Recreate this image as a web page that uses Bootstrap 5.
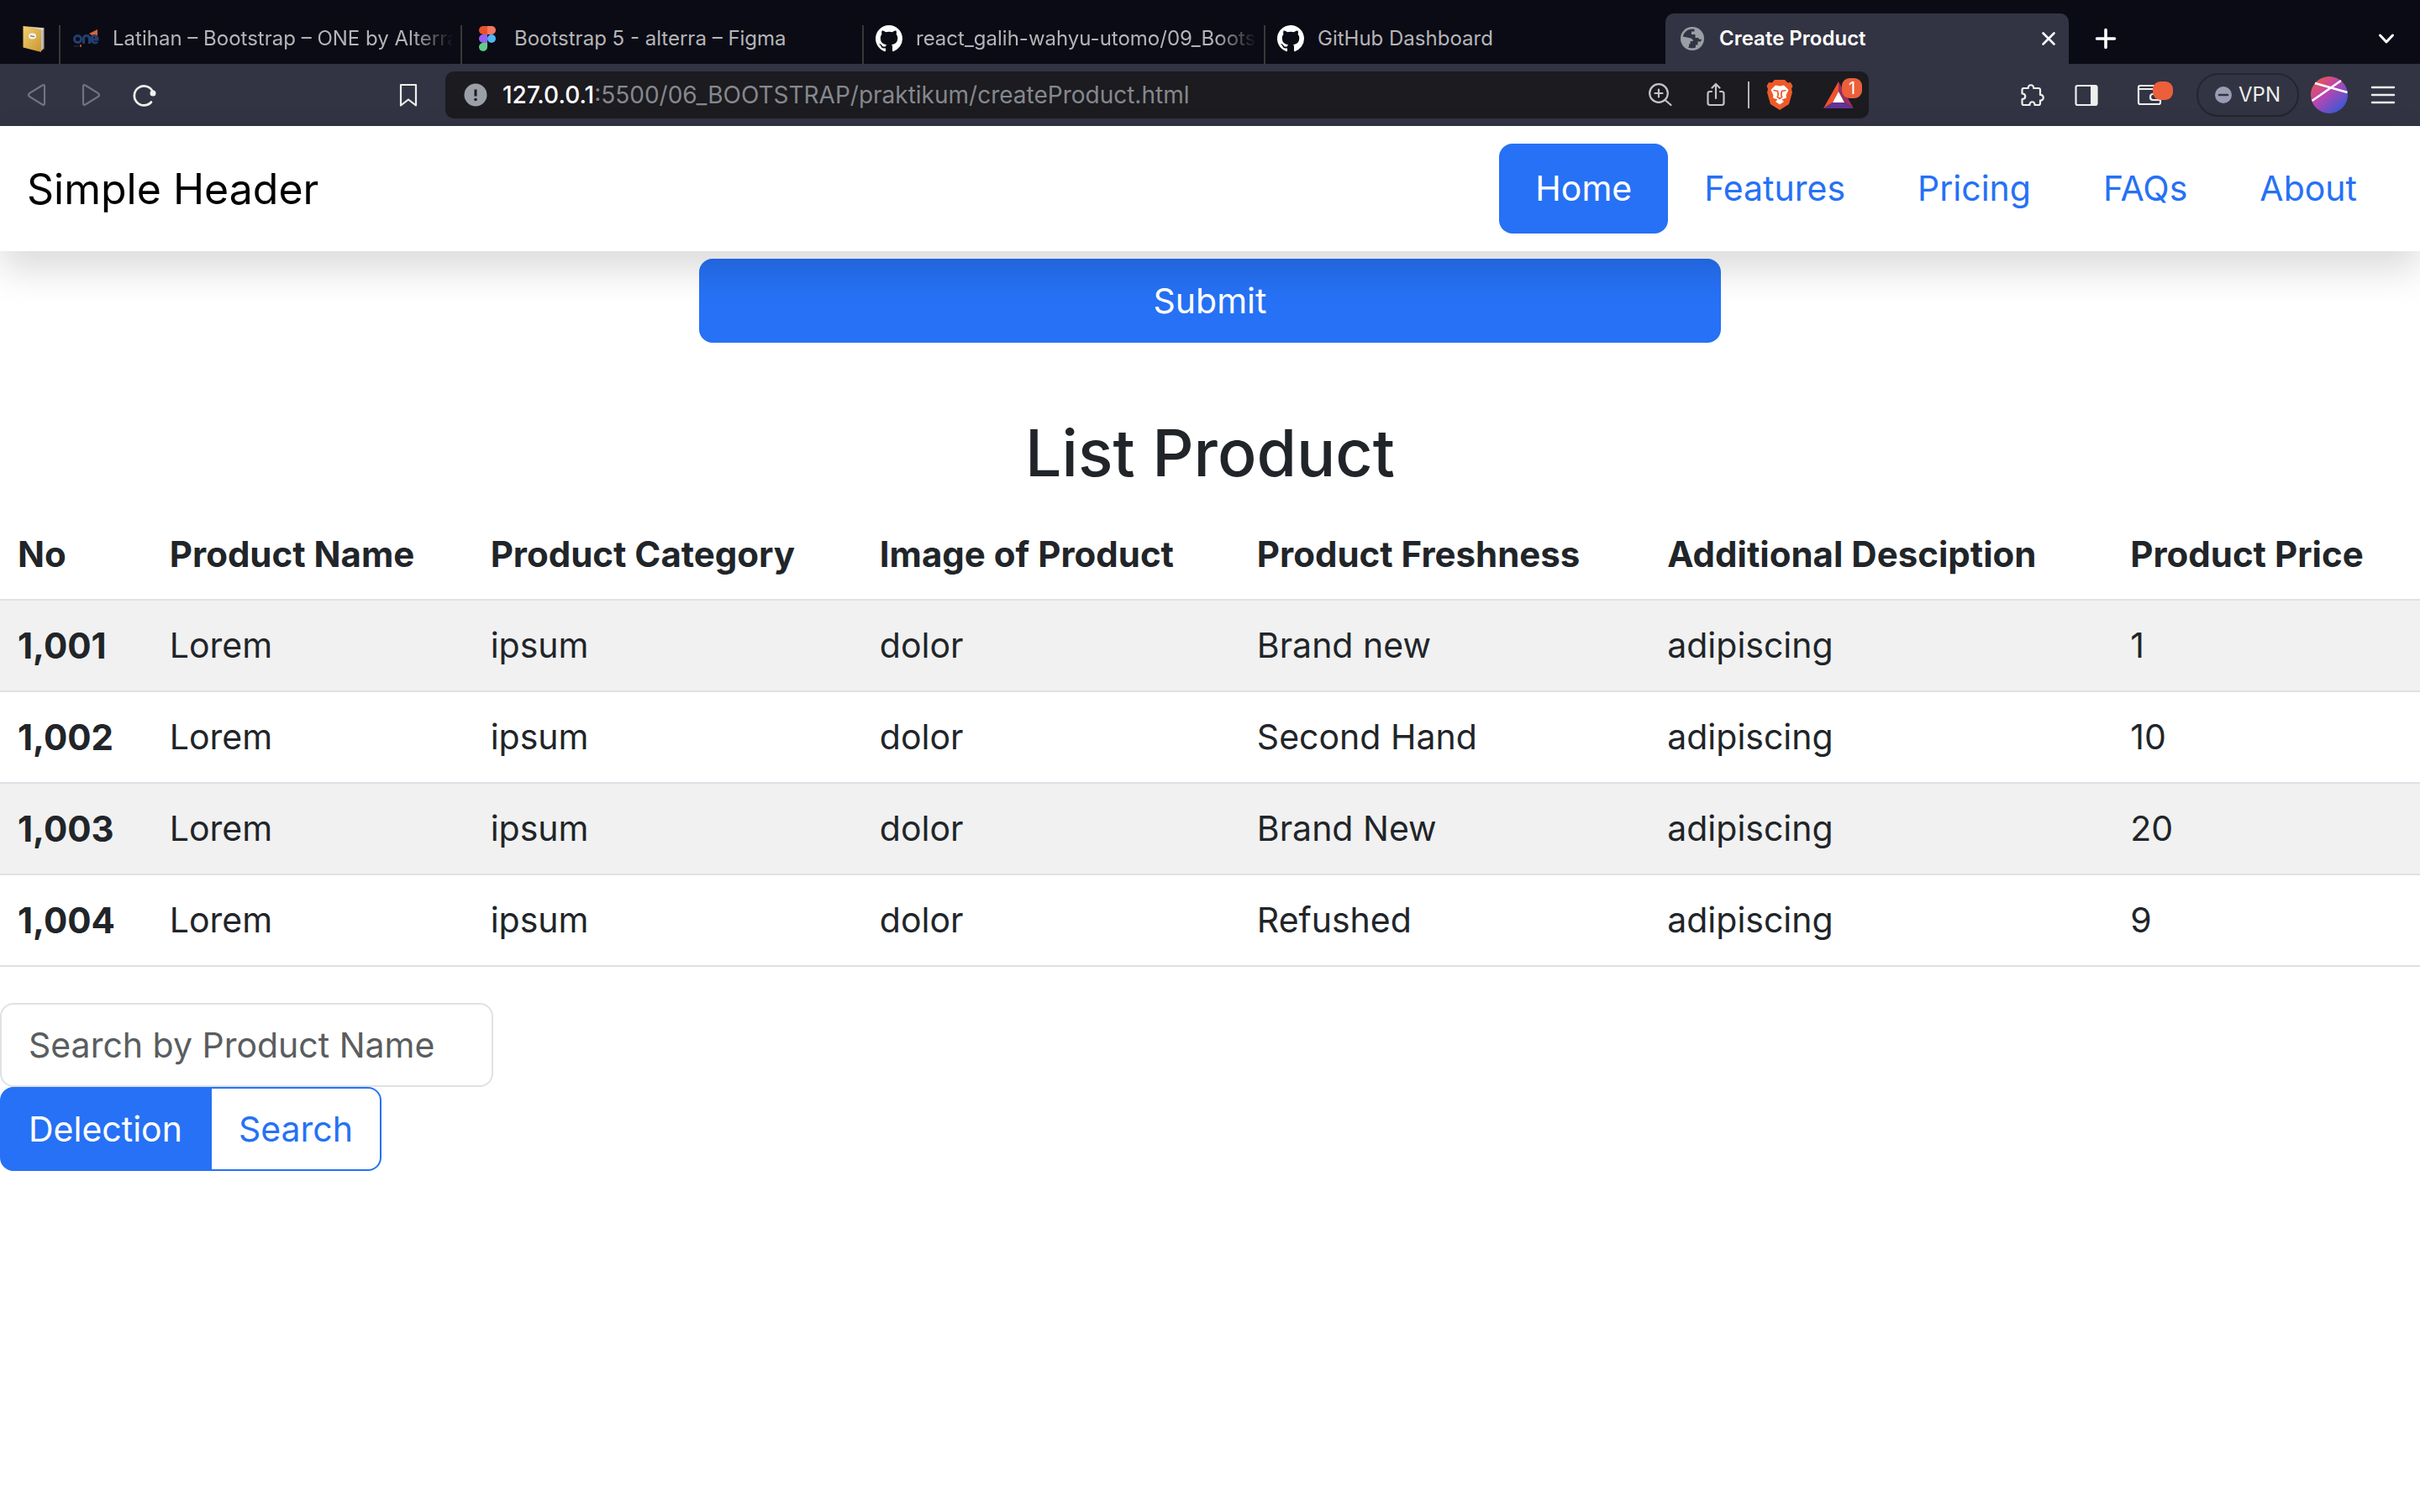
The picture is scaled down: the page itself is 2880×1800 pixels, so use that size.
<!DOCTYPE html>
<html lang="en">
<head>
<meta charset="utf-8">
<meta name="viewport" content="width=device-width, initial-scale=1">
<title>Create Product</title>
<link href="https://cdn.jsdelivr.net/npm/bootstrap@5.3.0/dist/css/bootstrap.min.css" rel="stylesheet">
<style>
:root{--blue:#2671f5;--bar:#323443;--strip:#0b0b15}
body{font-family:Inter,"Liberation Sans",sans-serif;font-size:41px;line-height:64px;color:#212529;background:#fff}
svg{display:block;flex:none}

/* Browser window */
.tab-strip{height:76px;background:var(--strip);font-size:24px;line-height:32px}
.pin-tab{width:72px;height:46px;border-right:2px solid #383838;padding:0 0 0 24px}
.site-tab{flex:0 1 478px;min-width:0;height:46px;gap:16px;padding:0 8px 14px 14px;border-right:2px solid #383838;color:#b5b5b7;text-decoration:none}
.site-tab.before-active{border-color:transparent;flex-basis:476px}
.site-tab.current{flex-basis:480px;height:60px;padding:0 12px 0 16px;border:0;border-radius:10px 10px 0 0;background:var(--bar);color:#fff;font-weight:600}
.tab-title{flex:1 1 0;min-width:0;overflow:hidden;white-space:nowrap}
.tab-title.faded{-webkit-mask-image:linear-gradient(90deg,#000 88%,transparent);mask-image:linear-gradient(90deg,#000 88%,transparent)}
.strip-end{height:60px}
.icon-btn{padding:0;border:0;background:none;line-height:1;color:#eee}
.tool-bar{height:74px;background:var(--bar);line-height:32px}
.bar-left{width:530px;padding:0 28px;gap:32px}
.bar-right{width:656px;padding:0 28px;gap:26px}
.address{height:56px;border-radius:10px;background:#1b1b20;padding:0 18px 0 20px;font-size:28px;line-height:54px;color:#86888c}
.address b{font-weight:500;color:#fff}
.address-tools{gap:20px}
.bar-rule{width:2px;height:32px;background:#b5b5b7}
.count{right:-10px;top:-4px;width:24px;height:24px;border-radius:9px;background:#eb5f3a;color:#fff;font-size:20px;line-height:24px;text-align:center}
.vpn{width:122px;height:52px;border:2px solid #24252d;border-radius:26px;background:none;color:#eee;font-size:24px;gap:8px;padding:0;margin-right:-12px}

/* Page */
.site-head{padding:21px 32px;background:#fff;box-shadow:0 21px 43px rgba(0,0,0,.15);z-index:10}
.site-name{font-size:50px;color:#000;text-decoration:none}
.nav-pills{--bs-nav-link-padding-x:43px;--bs-nav-link-padding-y:21px;--bs-nav-link-color:var(--blue);--bs-nav-pills-border-radius:16px;--bs-nav-pills-link-active-bg:var(--blue)}
.nav-pills .nav-link{line-height:65px;font-size:41px}
.btn-lgx{--bs-btn-padding-x:32px;--bs-btn-padding-y:16px;--bs-btn-font-size:41px;--bs-btn-line-height:64px;--bs-btn-border-width:2px;--bs-btn-border-radius:16px;--bs-btn-bg:var(--blue);--bs-btn-border-color:var(--blue)}
.btn-lgx.btn-outline-primary{--bs-btn-bg:transparent;--bs-btn-color:var(--blue)}
.submit-wrap{max-width:1216px;padding-top:9px}
.list-title{font-size:77px;line-height:96px;margin:83px 0 20px}
.goods{--bs-table-color:#212529;--bs-table-striped-bg:#f1f1f1;border-color:#dee2e6;margin-bottom:43px}
.goods th,.goods td{padding:21px;border-bottom-width:2px;line-height:65px}
.goods th{font-size:42px}
.goods thead th{line-height:64px}
.find-box{width:587px;height:100px;padding:16px 32px;font-size:41px;line-height:64px;border:2px solid #dee2e6;border-radius:16px}
.find-box::placeholder{color:#5a5d60;opacity:1}
</style>
</head>
<body>
<svg width="0" height="0" class="position-absolute" aria-hidden="true"><defs>
<symbol id="octocat" viewBox="0 0 16 16"><path fill="#fff" d="M8 0C3.58 0 0 3.58 0 8c0 3.54 2.29 6.53 5.47 7.59.4.07.55-.17.55-.38 0-.19-.01-.82-.01-1.49-2.01.37-2.53-.49-2.69-.94-.09-.23-.48-.94-.82-1.13-.28-.15-.68-.52-.01-.53.63-.01 1.08.58 1.23.82.72 1.21 1.87.87 2.33.66.07-.52.28-.87.51-1.07-1.78-.2-3.64-.89-3.64-3.95 0-.87.31-1.59.82-2.15-.08-.2-.36-1.02.08-2.12 0 0 .67-.21 2.2.82.64-.18 1.32-.27 2-.27.68 0 1.36.09 2 .27 1.53-1.04 2.2-.82 2.2-.82.44 1.1.16 1.92.08 2.12.51.56.82 1.27.82 2.15 0 3.07-1.87 3.75-3.65 3.95.29.25.54.73.54 1.48 0 1.07-.01 1.93-.01 2.2 0 .21.15.46.55.38A8.01 8.01 0 0 0 16 8c0-4.42-3.58-8-8-8z"/></symbol>
</defs></svg>

<div class="tab-strip d-flex align-items-end">
  <a href="#" class="pin-tab" aria-label="Notes"><svg width="32" height="32" viewBox="0 0 32 32"><defs><linearGradient id="nb" x1="0" y1="0" x2="1" y2="1"><stop offset="0" stop-color="#f3cf74"/><stop offset="1" stop-color="#c9972f"/></linearGradient></defs><path d="M4 1 29 3V28L25 31Z" fill="#6b5a35"/><path d="M7 1.500 28 3.500V27L25 30V6Z" fill="#dcdce4"/><path d="M26 6V28M27.500 5V27" stroke="#8f8f99" stroke-width=".7"/><path d="M3.500 1 25 5V32L3.500 26.500Z" fill="url(#nb)"/><ellipse cx="14.500" cy="13" rx="4.500" ry="3.600" fill="#f5f3ee"/><path d="M12 12.700 17 13.600" stroke="#77746c" stroke-width="1.200"/></svg></a>
  <a href="#" class="site-tab d-flex align-items-center">
    <svg width="32" height="32" viewBox="0 0 32 32" aria-hidden="true"><path d="M30 5V19L27 14 20 10Z" fill="#dc6238"/><g fill="none" stroke="#223e70" stroke-width="3"><circle cx="6.500" cy="16.500" r="4"/><path d="M13.500 22v-6q0-3.500 3.500-3.500t3.500 3.500v6M23 17h7q0-4.500-3.500-4.500T23 16.500t4 4.500q2 0 3-1"/></g><path d="M2 25H8" stroke="#252838" stroke-width="1.500"/><path d="M10 23V26" stroke="#dc6238" stroke-width="1.500"/></svg>
    <span class="tab-title faded">Latihan – Bootstrap – ONE by Alterra</span></a>
  <a href="#" class="site-tab d-flex align-items-center">
    <svg width="32" height="32" viewBox="0 0 32 32"><path d="M16 1H11a5 5 0 0 0 0 10h5Z" fill="#e5532d"/><path d="M16 1h5a5 5 0 0 1 0 10h-5Z" fill="#f37765"/><path d="M16 11h-5a5 5 0 0 0 0 10h5Z" fill="#9760f5"/><circle cx="21" cy="16" r="5" fill="#4fb6f7"/><path d="M16 21h-5a5 5 0 1 0 5 5Z" fill="#5fce85"/></svg>
    <span class="tab-title">Bootstrap 5 - alterra – Figma</span></a>
  <a href="#" class="site-tab d-flex align-items-center">
    <svg width="32" height="32"><use href="#octocat"/></svg>
    <span class="tab-title faded">react_galih-wahyu-utomo/09_Boots</span></a>
  <a href="#" class="site-tab before-active d-flex align-items-center">
    <svg width="32" height="32"><use href="#octocat"/></svg>
    <span class="tab-title">GitHub Dashboard</span></a>
  <div class="site-tab current d-flex align-items-center">
    <svg width="32" height="32" viewBox="0 0 32 32"><circle cx="16" cy="16" r="14" fill="#9a9fa5"/><path d="M16 4.500C10 4.500 6 8.500 4.800 13.500L12 15c3 .5 5 1.500 5 4h-3.500v3.500H11v4c2 1 6 1.200 9 0v-3h2.500v-4h3.500l1.300-3c-1 .8-3.300.5-4.300-1.500h-3.500v-4H15V7.500h3.500V4.800Z" fill="#323443"/><path d="M4.500 16.500H11l3 3-2 2.500v4C8 25.500 4 21 4.500 16.500Z" fill="#9a9fa5"/></svg>
    <span class="tab-title">Create Product</span>
    <button class="icon-btn" aria-label="Close tab"><svg width="24" height="24" viewBox="0 0 24 24"><path d="m5.500 5.500 13 13m0-13-13 13" stroke="#fff" stroke-width="2.600" stroke-linecap="round"/></svg></button>
  </div>
  <div class="strip-end flex-grow-1 d-flex align-items-center justify-content-between">
    <button class="icon-btn ms-4 ps-1" aria-label="New tab"><svg width="32" height="32" viewBox="0 0 32 32"><path d="M16 5.500v21M5.500 16h21" stroke="#fff" stroke-width="3.600" stroke-linecap="round"/></svg></button>
    <button class="icon-btn me-4" aria-label="Search tabs"><svg width="32" height="32" viewBox="0 0 32 32"><path d="m8.500 12 7.500 8 7.500-8" fill="none" stroke="#fff" stroke-width="3" stroke-linecap="round" stroke-linejoin="round"/></svg></button>
  </div>
</div>

<div class="tool-bar d-flex align-items-center">
  <div class="bar-left d-flex align-items-center flex-shrink-0">
    <button class="icon-btn" aria-label="Back"><svg width="32" height="32" viewBox="0 0 32 32"><path d="M25 6v20q0 3-2.500 1.500L7 18q-2-2 0-4L22.500 4.500Q25 3 25 6Z" fill="none" stroke="#717380" stroke-width="2.200"/></svg></button>
    <button class="icon-btn" aria-label="Forward"><svg width="32" height="32" viewBox="0 0 32 32"><path d="M7 6v20q0 3 2.500 1.500L25 18q2-2 0-4L9.500 4.500Q7 3 7 6Z" fill="none" stroke="#717380" stroke-width="2.200"/></svg></button>
    <button class="icon-btn" aria-label="Reload"><svg width="32" height="32" viewBox="0 0 32 32"><path d="M25.500 11.500A11.500 11.500 0 1 0 24 24.500" fill="none" stroke="#f0f0f0" stroke-width="2.700" stroke-linecap="round"/><circle cx="26" cy="14" r="3.500" fill="#f0f0f0"/></svg></button>
    <button class="icon-btn ms-auto" aria-label="Bookmark"><svg width="32" height="32" viewBox="0 0 32 32"><path d="M7 4h18v24.500l-9-7-9 7Z" fill="none" stroke="#eee" stroke-width="2.200" stroke-linejoin="round"/></svg></button>
  </div>
  <div class="address flex-grow-1 d-flex align-items-center">
    <svg width="32" height="32" viewBox="0 0 32 32"><circle cx="16" cy="16" r="13.500" fill="#9aa0a6"/><path d="M16 9.500v8" stroke="#1b1b20" stroke-width="3"/><circle cx="16" cy="21.500" r="1.800" fill="#1b1b20"/></svg>
    <div class="flex-grow-1 ms-3 text-nowrap" role="textbox" tabindex="0" aria-label="Address"><b>127.0.0.1</b>:5500/06_BOOTSTRAP/praktikum/createProduct.html</div>
    <div class="address-tools d-flex align-items-center">
      <button class="icon-btn me-3" aria-label="Zoom"><svg width="32" height="32" viewBox="0 0 32 32"><circle cx="14" cy="14" r="10.800" fill="none" stroke="#c4c4c6" stroke-width="2.200"/><path d="M14 9.500v9M9.500 14h9M21.500 22l7 6" stroke="#c4c4c6" stroke-width="2.200" stroke-linecap="round"/></svg></button>
      <button class="icon-btn" aria-label="Share"><svg width="32" height="32" viewBox="0 0 32 32"><path d="M9 12H7q-2.500 0-2.500 2.500v11Q4.500 28 7 28h14q2.500 0 2.500-2.500v-11Q23.500 12 21 12h-2M14 20V3m-4.500 4.500L14 3l4.500 4.500" fill="none" stroke="#c4c4c6" stroke-width="2.200" stroke-linecap="round"/></svg></button>
      <span class="bar-rule"></span>
      <button class="icon-btn" aria-label="Brave Shields"><svg width="32" height="36" viewBox="0 0 32 36"><path d="M10 0h12l3.500 3.500L29 3l2.500 4.500L30 11l1 4-4 14-11 7-11-7L1 15l1-4L.500 7.500 3 3l3.500.5Z" fill="#ee5a29"/><path d="m11 6.500 5 1 5-1 5.500 5.500-3 6.500.5 3-5.500 2L21 26l-5 3.500L11 26l2.500-2.500-5.500-2 .5-3-3-6.500Z" fill="#fff"/><path d="m8.500 12.500 5 1 .8 4.500-1 2.500 2.700 2 2.700-2-1-2.500.8-4.500 5-1" fill="none" stroke="#ee5a29" stroke-width="1.700"/></svg></button>
      <button class="icon-btn position-relative ms-3" aria-label="Brave Rewards"><svg width="36" height="32" viewBox="0 0 36 32"><path d="M18 0 0 32 11 25 18 12Z" fill="#f4512c"/><path d="m18 0 18 32-11-7L18 12Z" fill="#9b2c62"/><path d="M0 32h36l-11-7H11Z" fill="#633393"/><path d="m18 12 7 13H11Z" fill="#fff"/></svg><span class="count position-absolute">1</span></button>
    </div>
  </div>
  <div class="bar-right d-flex align-items-center justify-content-end flex-shrink-0">
    <button class="icon-btn" aria-label="Extensions"><svg width="32" height="32" viewBox="0 0 32 32"><path d="M5.500 8h6.300c-.8-5 7-5 6.300 0H24q2 0 2 2v6c5-.5 5 7 0 6.500V26q0 2-2 2h-4.500c.5-5-6.500-5-6 0H6.500q-2 0-2-2v-5c5 0 5-6.500 0-6.500V10q0-2 2-2Z" fill="none" stroke="#eee" stroke-width="2.200" stroke-linejoin="round"/></svg></button>
    <button class="icon-btn ms-2" aria-label="Sidebar"><svg width="32" height="32" viewBox="0 0 32 32"><rect x="2.500" y="5" width="25" height="23" rx="2" fill="none" stroke="#eee" stroke-width="2.200"/><path d="M20 5h8v23h-8Z" fill="#eee"/></svg></button>
    <button class="icon-btn ms-3" aria-label="Wallet"><svg width="46" height="32" viewBox="0 0 46 32"><rect x="3" y="5" width="26" height="22" rx="2" fill="none" stroke="#eee" stroke-width="2.200"/><path d="M3 9h26M29 15h-9q-3 0-3 3.500t3 3.500h9" fill="none" stroke="#eee" stroke-width="2.200"/><rect x="20" y="0" width="24" height="22" rx="9" fill="#eb5f3a"/></svg></button>
    <button class="vpn d-flex align-items-center justify-content-center"><svg width="20" height="20" viewBox="0 0 20 20"><circle cx="10" cy="10" r="10" fill="#9a9cb3"/><path d="M5 10h10" stroke="#323443" stroke-width="2.600" stroke-linecap="round"/></svg>VPN</button>
    <button class="icon-btn" aria-label="Profile"><svg width="44" height="44" viewBox="0 0 44 44"><defs><linearGradient id="pf" x1=".15" y1=".1" x2=".85" y2=".9"><stop offset="0" stop-color="#e85650"/><stop offset=".4" stop-color="#bb45b0"/><stop offset="1" stop-color="#3959d6"/></linearGradient></defs><circle cx="22" cy="22" r="22" fill="url(#pf)"/><path d="m5 8 38.500 11M36 5 1.500 29" stroke="#fff" stroke-width="2.600"/></svg></button>
    <button class="icon-btn" aria-label="Menu"><svg width="32" height="32" viewBox="0 0 32 32"><path d="M3 7h26M3 16h26M3 25h26" stroke="#eee" stroke-width="2.400" stroke-linecap="round"/></svg></button>
  </div>
</div>

<header class="site-head sticky-top d-flex align-items-center justify-content-between">
  <a href="#" class="site-name">Simple Header</a>
  <ul class="nav nav-pills">
    <li class="nav-item"><a href="#" class="nav-link active" aria-current="page">Home</a></li>
    <li class="nav-item"><a href="#" class="nav-link">Features</a></li>
    <li class="nav-item"><a href="#" class="nav-link">Pricing</a></li>
    <li class="nav-item"><a href="#" class="nav-link">FAQs</a></li>
    <li class="nav-item"><a href="#" class="nav-link">About</a></li>
  </ul>
</header>

<main>
  <div class="submit-wrap mx-auto"><button type="submit" class="btn btn-primary btn-lgx d-block w-100">Submit</button></div>
  <h1 class="list-title text-center">List Product</h1>
  <table class="table table-striped goods">
    <thead><tr><th scope="col">No</th><th scope="col">Product Name</th><th scope="col">Product Category</th><th scope="col">Image of Product</th><th scope="col">Product Freshness</th><th scope="col">Additional Desciption</th><th scope="col">Product Price</th></tr></thead>
    <tbody>
      <tr><th scope="row">1,001</th><td>Lorem</td><td>ipsum</td><td>dolor</td><td>Brand new</td><td>adipiscing</td><td>1</td></tr>
      <tr><th scope="row">1,002</th><td>Lorem</td><td>ipsum</td><td>dolor</td><td>Second Hand</td><td>adipiscing</td><td>10</td></tr>
      <tr><th scope="row">1,003</th><td>Lorem</td><td>ipsum</td><td>dolor</td><td>Brand New</td><td>adipiscing</td><td>20</td></tr>
      <tr><th scope="row">1,004</th><td>Lorem</td><td>ipsum</td><td>dolor</td><td>Refushed</td><td>adipiscing</td><td>9</td></tr>
    </tbody>
  </table>
  <input type="text" class="form-control find-box" placeholder="Search by Product Name" aria-label="Search by Product Name">
  <div class="btn-group" role="group" aria-label="Product actions">
    <button type="button" class="btn btn-primary btn-lgx">Delection</button>
    <button type="button" class="btn btn-outline-primary btn-lgx">Search</button>
  </div>
</main>
<script src="https://cdn.jsdelivr.net/npm/bootstrap@5.3.0/dist/js/bootstrap.bundle.min.js"></script>
</body>
</html>
